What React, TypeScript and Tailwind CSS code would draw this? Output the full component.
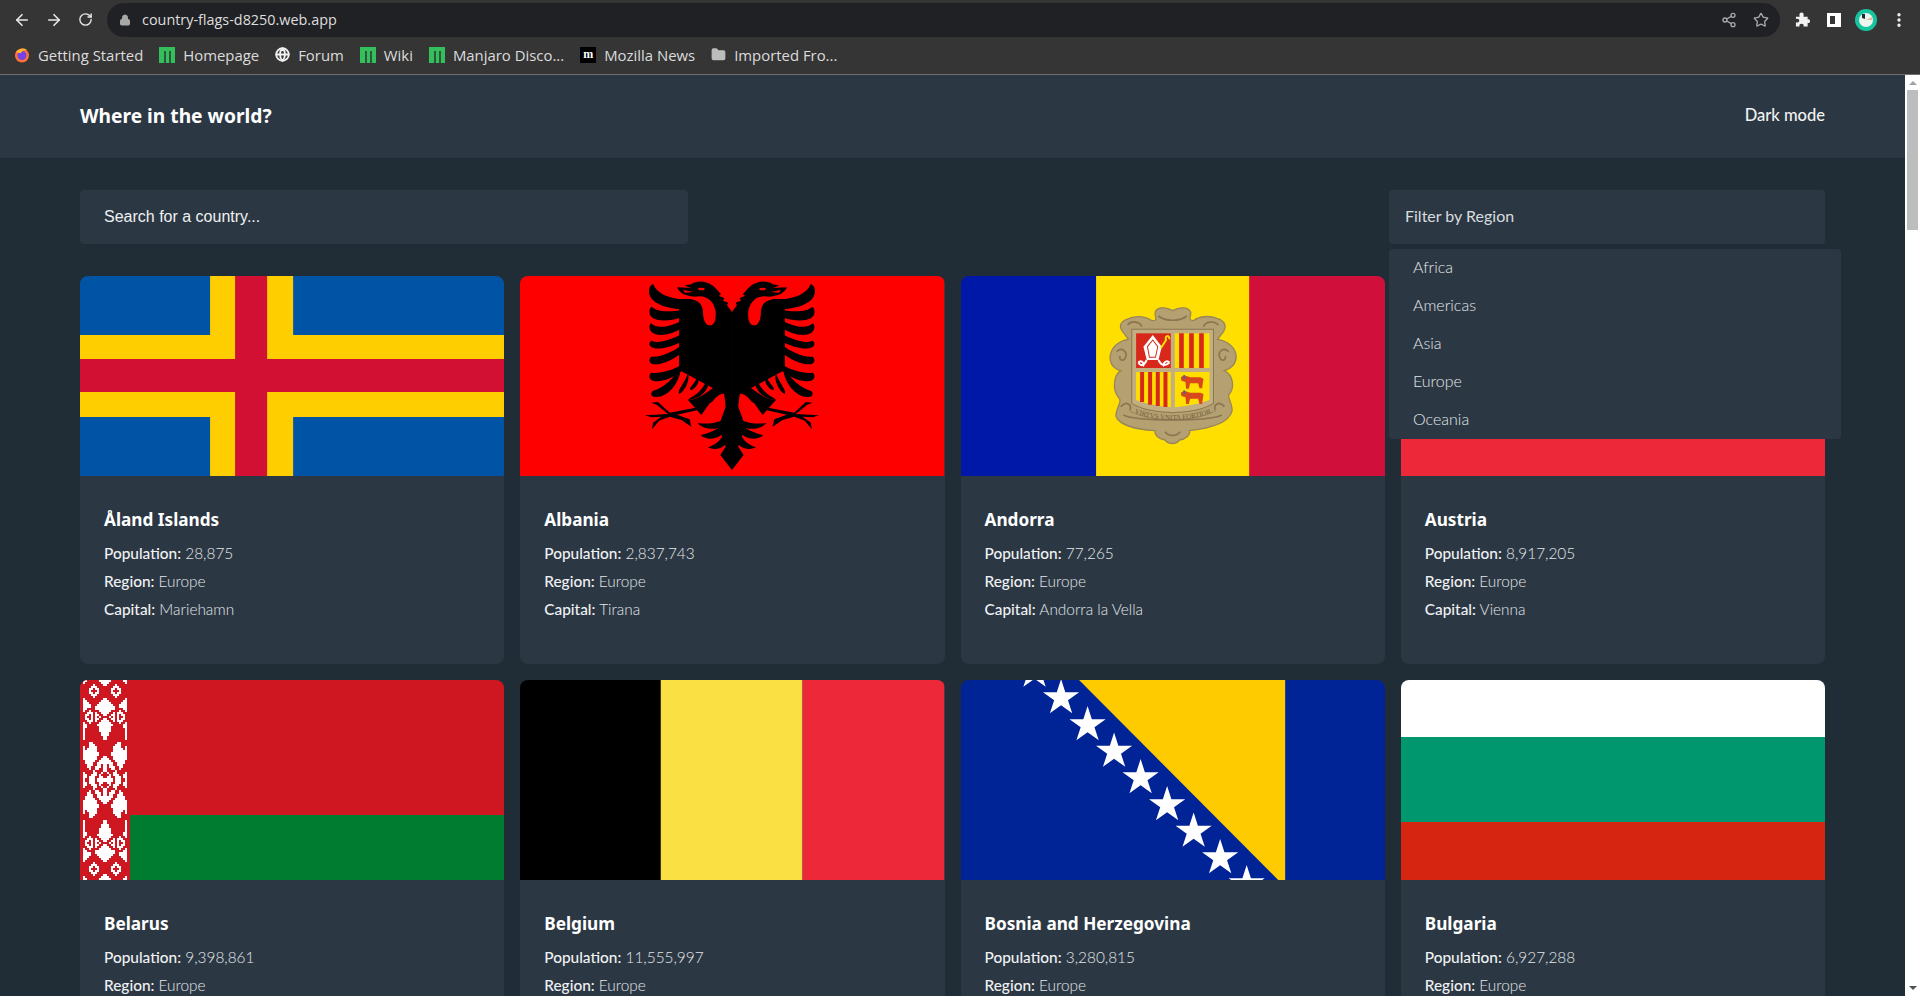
import React from "react";
import { ArrowLeft, ArrowRight, RotateCw, Lock, Share2, Star, EllipsisVertical, Globe, Folder } from "lucide-react";

const StarShape = ({ cx, cy, r = 19 }: { cx: number; cy: number; r?: number }) => {
  const pts: string[] = [];
  for (let i = 0; i < 10; i++) {
    const rad = i % 2 === 0 ? r : r * 0.382;
    const a = (-90 + i * 36) * (Math.PI / 180);
    pts.push(`${cx + rad * Math.cos(a)},${cy + rad * Math.sin(a)}`);
  }
  return <polygon points={pts.join(" ")} fill="#fff" />;
};

const FlagAland = () => (
  <svg viewBox="0 0 424 200" preserveAspectRatio="none" className="block w-full h-full">
    <rect width="424" height="200" fill="#0053a5" />
    <rect x="130" width="83" height="200" fill="#ffce00" />
    <rect y="59" width="424" height="82" fill="#ffce00" />
    <rect x="155" width="32" height="200" fill="#d21034" />
    <rect y="83" width="424" height="33" fill="#d21034" />
  </svg>
);

const EagleHalf = () => (
  <g>
    {/* wing feathers */}
    <path d="M100 42 C112 72 150 86 190 88 L190 118 C130 116 82 95 88 58 C89 50 94 44 100 42Z" />
    <path d="M96 110 C112 126 145 126 190 120 L190 140 C150 156 88 158 89 125 C89 116 92 112 96 110Z" />
    <path d="M94 160 C112 178 150 172 190 150 L190 172 C150 200 92 205 89 172 C89 166 91 162 94 160Z" />
    <path d="M95 212 C115 222 150 212 190 190 L190 212 C150 236 92 245 89 222 C89 217 92 214 95 212Z" />
    <path d="M95 260 C120 262 155 250 190 222 L190 245 C150 280 92 295 89 272 C89 266 91 262 95 260Z" />
    <path d="M94 308 C120 312 160 300 185 285 L190 300 C150 335 92 345 89 320 C89 314 91 310 94 308Z" />
    <path d="M100 362 C130 355 165 325 183 288 C185 330 150 380 110 381 C96 381 88 372 100 362Z" />
    {/* body and neck */}
    <path d="M178 88 L250 85 L337 125 L337 600 L302 555 L318 530 L300 480 L300 460 L318 410 L314 372 L262 345 L178 300Z" />
    {/* head */}
    <path d="M337 125 L322 106 L326 98 L310 92 L314 84 L298 78 L304 72 C290 58 284 45 262 38 C245 32 225 35 215 43 L195 46 C203 50 207 53 216 54 L172 52 C178 68 195 78 225 80 L290 110Z" />
    {/* claw feathers under the wing */}
    <path d="M205 310 C212 330 195 365 178 372 C172 360 192 345 205 310Z" />
    <path d="M232 315 C248 335 222 362 212 360 C205 350 232 340 232 315Z" />
    <path d="M264 322 C278 345 250 388 205 390 L210 385 C240 370 258 345 264 322Z" />
    <path d="M205 390 C245 390 275 350 300 345 L320 375 L270 400 L245 435 Z" />
    {/* talon */}
    <path d="M228 413 L150 428 L115 396 L95 398 L112 405 L145 432 L75 436 L95 442 L125 440 L100 458 L97 478 L118 452 L150 440 L185 450 L215 470 L210 448 L172 434 L235 420Z" />
    {/* tail feathers */}
    <path d="M233 458 C250 462 275 462 292 456 L305 452 L305 470 C290 480 250 480 233 458Z" />
    <path d="M243 495 C265 490 285 482 302 470 L310 490 C300 505 262 515 243 495Z" />
    <path d="M265 532 C285 525 300 515 310 495 L322 510 C322 530 290 545 265 532Z" />
    {/* red gaps */}
    <path d="M192 84 C220 88 248 90 250 125 C250 150 258 166 270 166 C284 166 290 150 288 125 C284 95 262 72 225 80 C210 82 200 82 192 84Z" fill="#ff0000" />
    <path d="M314 372 C298 365 275 395 250 435 C275 430 312 405 314 372Z" fill="#ff0000" />
    <ellipse cx="245" cy="57" rx="10" ry="4" fill="#ff0000" />
    <path d="M190 60 L222 66 L195 68Z" fill="#ff0000" />
  </g>
);

const FlagAlbania = () => (
  <svg viewBox="0 0 425 200" preserveAspectRatio="none" className="block w-full h-full">
    <rect width="425" height="200" fill="#ff0000" />
    <g transform="translate(100,-6) scale(0.33333)">
      <EagleHalf />
      <g transform="translate(674,0) scale(-1,1)">
        <EagleHalf />
      </g>
    </g>
  </svg>
);

const FlagAndorra = () => (
  <svg viewBox="0 0 424 200" preserveAspectRatio="none" className="block w-full h-full">
    <rect width="136" height="200" fill="#0018a8" />
    <rect x="135" width="154" height="200" fill="#fedf00" />
    <rect x="288" width="136" height="200" fill="#d0103a" />
    <g transform="translate(129,4) scale(0.33333)">
      {/* cartouche */}
      <path
        d="M248 92 C225 78 195 82 195 100 C195 115 205 122 185 122 C165 108 135 105 110 118 C90 125 85 140 100 158 L115 178 C85 182 60 205 60 235 C62 260 80 270 92 272 C72 285 65 325 85 352 C100 365 75 385 78 410 C88 432 130 448 195 452 C192 470 215 478 225 480 C235 494 258 494 268 480 C285 478 302 465 298 452 C360 445 415 430 425 395 C430 380 415 360 415 345 C435 325 430 285 402 272 C425 265 438 250 438 228 C435 200 410 182 382 178 L400 155 C412 135 400 120 380 115 C355 105 325 110 310 122 C292 122 302 110 302 98 C298 82 270 78 248 92Z"
        fill="#b5a071"
        stroke="#9a8658"
        strokeWidth="4"
      />
      <path d="M205 108 C225 125 270 125 290 108 M112 135 C125 120 150 125 155 140 M385 135 C370 120 345 125 340 140 M80 215 C95 200 115 215 105 235 C100 245 85 240 90 228 M415 215 C400 200 380 215 390 235 C395 245 410 240 405 228 M100 405 C140 425 355 425 395 405 M92 380 C110 360 125 375 120 390 M403 380 C385 360 370 375 375 390 M225 455 C235 470 260 470 270 455" fill="none" stroke="#8a7650" strokeWidth="5" />
      {/* shield */}
      <path d="M125 148 H370 V370 C330 395 280 395 248 398 C215 395 165 395 125 370Z" fill="#c2ae80" stroke="#8a7650" strokeWidth="3" />
      <rect x="138" y="160" width="104" height="104" fill="#d8281c" />
      <rect x="254" y="160" width="104" height="104" fill="#fedf00" />
      <path d="M267 160h14v104h-14zM297 160h14v104h-14zM327 160h14v104h-14z" fill="#d8281c" />
      <path d="M138 276 H242 V382 C205 378 170 372 138 360Z" fill="#fedf00" />
      <path d="M150 276h12v90h-12zM174 276h12v98h-12zM197 276h12v102h-12zM220 276h12v105h-12z" fill="#d8281c" />
      <path d="M254 276 H358 V360 C325 372 290 378 254 382Z" fill="#fedf00" />
      {/* mitre and crozier */}
      <path d="M188 165 L215 200 L205 240 H170 L160 200Z" fill="#fff" />
      <path d="M172 200 L188 180 L203 200 L196 232 H178Z" fill="none" stroke="#d8281c" strokeWidth="3" />
      <path d="M145 248 C155 235 165 255 158 258 M238 248 C228 235 215 255 222 258 M170 240 C160 260 150 258 145 248 M205 240 C215 260 228 258 238 248" fill="none" stroke="#fff" strokeWidth="6" />
      <path d="M212 205 L228 180 C222 168 238 162 238 178" fill="none" stroke="#fedf00" strokeWidth="6" />
      {/* cows */}
      <path d="M272 292 L282 286 L300 292 H330 L340 296 L336 325 H328 L324 310 H300 L296 326 H288 L286 306 L274 302Z" fill="#d8481c" />
      <path d="M272 338 L282 332 L300 338 H330 L340 342 L336 372 H328 L324 356 H300 L296 372 H288 L286 352 L274 348Z" fill="#d8481c" />
      <path d="M282 285 v12 M282 331 v12" stroke="#1f6fc0" strokeWidth="4" />
      <path d="M118 392 C180 428 310 428 378 392" fill="none" stroke="#8a7650" strokeWidth="2" id="motto-line" />
      <text fontFamily="'Liberation Serif', serif" fontSize="21" fill="#6f5d3a" textAnchor="middle">
        <textPath href="#motto-line" startOffset="50%">VIRTVS VNITA FORTIOR</textPath>
      </text>
    </g>
  </svg>
);

const FlagAustria = () => (
  <svg viewBox="0 0 424 200" preserveAspectRatio="none" className="block w-full h-full">
    <rect width="424" height="200" fill="#ed2939" />
    <rect y="67" width="424" height="67" fill="#fff" />
  </svg>
);

// one quarter of the hoist ornament, # is white, cells are 2px
const belarusRows = [
  ".##......###", ".#........##", "......#....#", ".....###....", "....##.##...",
  "....#...#...", "....##.##...", ".....###....", "......#.....", ".#.........#",
  ".##.......##", ".###.....###", ".####...####", ".####..#####", ".##....#####",
  ".#..#....###", "...###.#..##", "..##.#.##..#", "..#..#.#.#..", "..##.#.##..#",
  "...###.#..##", ".#..#....###", ".##.....####", ".##......###", ".#.......###",
  ".#.......###", ".#........##", ".#........##", ".#.........#", ".#.........#",
  "............", "....##......", "....###.....", ".#..####....", ".#.#####....",
  ".#######....", ".########...", ".########...", ".#######...#", ".#######..##",
  "..#####..###", "..####..####", "...###..##.#", "...##..###.#", "....#..##..#",
  "......#....#", ".#....##..#.", ".##..###.#..", ".##.###..##.", ".#..###.####",
];

const FlagBelarus = () => {
  const cells: React.ReactNode[] = [];
  belarusRows.forEach((row, r) => {
    row.split("").forEach((ch, c) => {
      if (ch !== "#") return;
      [
        [c, r],
        [23 - c, r],
        [c, 99 - r],
        [23 - c, 99 - r],
      ].forEach(([x, y]) => {
        cells.push(<rect key={`${x}-${y}`} x={1 + x * 2} y={y * 2} width="2" height="2" fill="#fff" />);
      });
    });
  });
  return (
    <svg viewBox="0 0 424 200" preserveAspectRatio="none" className="block w-full h-full">
      <rect width="424" height="135" fill="#ce1720" />
      <rect y="135" width="424" height="65" fill="#007c30" />
      <rect width="50" height="200" fill="#ce1720" />
      <g shapeRendering="crispEdges">{cells}</g>
    </svg>
  );
};

const FlagBelgium = () => (
  <svg viewBox="0 0 425 200" preserveAspectRatio="none" className="block w-full h-full">
    <rect width="142" height="200" fill="#000" />
    <rect x="141" width="142" height="200" fill="#fae042" />
    <rect x="283" width="142" height="200" fill="#ed2939" />
  </svg>
);

const FlagBosnia = () => (
  <svg viewBox="0 0 424 200" preserveAspectRatio="none" className="block w-full h-full">
    <rect width="424" height="200" fill="#002395" />
    <polygon points="118,0 324,0 324,200 317,200" fill="#fecb00" />
    {[-8.5, 18, 45, 71.5, 98, 125, 151.5, 178, 204].map((y, i) => (
      <StarShape key={y} cx={73.5 + i * 26.5} cy={y} />
    ))}
  </svg>
);

const FlagBulgaria = () => (
  <svg viewBox="0 0 424 200" preserveAspectRatio="none" className="block w-full h-full">
    <rect width="424" height="57" fill="#fff" />
    <rect y="57" width="424" height="85" fill="#00966e" />
    <rect y="142" width="424" height="58" fill="#d62612" />
  </svg>
);

const countries = [
  { name: "Åland Islands", population: "28,875", capital: "Mariehamn", flag: <FlagAland /> },
  { name: "Albania", population: "2,837,743", capital: "Tirana", flag: <FlagAlbania /> },
  { name: "Andorra", population: "77,265", capital: "Andorra la Vella", flag: <FlagAndorra /> },
  { name: "Austria", population: "8,917,205", capital: "Vienna", flag: <FlagAustria /> },
  { name: "Belarus", population: "9,398,861", capital: "Minsk", flag: <FlagBelarus /> },
  { name: "Belgium", population: "11,555,997", capital: "Brussels", flag: <FlagBelgium /> },
  { name: "Bosnia and Herzegovina", population: "3,280,815", capital: "Sarajevo", flag: <FlagBosnia /> },
  { name: "Bulgaria", population: "6,927,288", capital: "Sofia", flag: <FlagBulgaria /> },
];

const ManjaroIcon = () => (
  <svg viewBox="0 0 16 16" className="w-4 h-4 shrink-0">
    <rect width="16" height="16" fill="#35bf5c" />
    <rect x="5" y="4" width="2" height="12" fill="#2b2b2b" opacity="0.7" />
    <rect x="10" y="4" width="2" height="12" fill="#2b2b2b" opacity="0.7" />
  </svg>
);

const FirefoxIcon = () => (
  <svg viewBox="0 0 16 16" className="w-4 h-4 shrink-0">
    <circle cx="8" cy="8.5" r="7" fill="#ff7139" />
    <circle cx="8" cy="8.5" r="4.5" fill="#7542e5" />
    <path d="M2 5 C5 2 9 0 13 3 C9 3 8 4 7 6 C5 6 3 6 2 5Z" fill="#ffb52e" />
  </svg>
);

const Bookmark = ({ icon, label }: { icon: React.ReactNode; label: string }) => (
  <div className="flex items-center gap-2">
    {icon}
    <span className="text-[14.9px] text-[#dcdcdc]">{label}</span>
  </div>
);

const BrowserChrome = () => (
  <div className="h-[75px] bg-[#353535] border-b border-[#6f6f6f] font-['Open_Sans',sans-serif]">
    {/* toolbar */}
    <div className="h-[40px] flex items-center pl-[13px] pr-[10px] pb-px">
      <ArrowLeft size={18} color="#e8e8e8" strokeWidth={2.2} />
      <ArrowRight size={18} color="#e8e8e8" strokeWidth={2.2} className="ml-[14px]" />
      <RotateCw size={15} color="#e8e8e8" strokeWidth={2.2} className="ml-[15px]" />
      <div className="ml-[14px] w-[1673px] h-[34px] rounded-full bg-[#202124] flex items-center pl-[12px] pr-[11px]">
        <Lock size={12} color="#a8a8a8" fill="#a8a8a8" />
        <span className="ml-[11px] text-[14.4px] text-[#dedede]">country-flags-d8250.web.app</span>
        <Share2 size={16} color="#a8a8a8" className="ml-auto" />
        <Star size={16} color="#a8a8a8" strokeWidth={2} className="ml-[16px]" />
      </div>
      <svg viewBox="0 0 16 16" className="w-[15px] h-[15px] ml-[15px]" fill="#f2f2f2">
        <path d="M1 5 H5 C4 2 5.500 0.500 7 0.500 C8.500 0.500 10 2 9 5 H13.500 V8 C15.500 7 16 8.500 16 9.800 C16 11.200 15 12.500 13.500 11.500 V15.500 H9 C10 13.500 8.500 12.500 7 12.500 C5.500 12.500 4 13.500 5 15.500 H1 V11 C3 12 4.500 10.500 4.500 9 C4.500 7.500 3 6.500 1 7.500Z" />
      </svg>
      <div className="ml-[17px] w-[14px] h-[14px] bg-white flex justify-start">
        <div className="ml-[3px] mt-[3px] w-[5px] h-[8px] bg-[#353535]" />
      </div>
      <svg viewBox="0 0 22 22" className="w-[22px] h-[22px] ml-[14px]">
        <circle cx="11" cy="11" r="11" fill="#16c5a0" />
        <circle cx="11" cy="11" r="7" fill="#eef5ee" />
        <path d="M7 5 L10 5 L10 10 L7 9Z" fill="#1b2a38" />
        <path d="M11 11 L17 8 L17 11Z" fill="#e8b8a0" />
      </svg>
      <EllipsisVertical size={18} color="#f2f2f2" strokeWidth={2.5} className="ml-[13px]" />
    </div>
    {/* bookmarks bar */}
    <div className="h-[30px] flex items-center pl-[14px] gap-[16px]">
      <Bookmark icon={<FirefoxIcon />} label="Getting Started" />
      <Bookmark icon={<ManjaroIcon />} label="Homepage" />
      <Bookmark icon={<Globe size={15} color="#f2f2f2" strokeWidth={3} />} label="Forum" />
      <Bookmark icon={<ManjaroIcon />} label="Wiki" />
      <Bookmark icon={<ManjaroIcon />} label="Manjaro Disco..." />
      <Bookmark
        icon={
          <span className="w-[16px] h-[16px] bg-black text-white text-[12px] font-bold leading-[15px] text-center font-['Liberation_Serif',serif]">
            m
          </span>
        }
        label="Mozilla News"
      />
      <Bookmark icon={<Folder size={15} color="#bdbdbd" fill="#bdbdbd" />} label="Imported Fro..." />
    </div>
  </div>
);

const Card = ({ name, population, capital, flag }: (typeof countries)[number]) => (
  <div className="h-[388px] rounded-lg overflow-hidden bg-[#2b3844]">
    <div className="h-[200px]">{flag}</div>
    <div className="pt-[32px] px-6">
      <h2 className="font-['Noto_Sans',sans-serif] text-[17.2px] leading-[24px] font-bold text-white mb-[7px]">{name}</h2>
      <p className="text-[15.4px] leading-[28px] font-light text-[#e4e6e9]"><span className="font-medium text-[#f0f1f3]">Population:</span> {population}</p>
      <p className="text-[15.4px] leading-[28px] font-light text-[#e4e6e9]"><span className="font-medium text-[#f0f1f3]">Region:</span> Europe</p>
      <p className="text-[15.4px] leading-[28px] font-light text-[#e4e6e9]"><span className="font-medium text-[#f0f1f3]">Capital:</span> {capital}</p>
    </div>
  </div>
);

export default function App() {
  return (
    <div className="h-[996px] w-[1920px] overflow-hidden flex flex-col bg-[#202c36] font-['Lato',sans-serif]">
      <BrowserChrome />
      <div className="flex flex-1 min-h-0">
        <div className="flex-1 min-w-0">
          {/* Header */}
          <header className="h-[83px] bg-[#2b3844] px-20 flex items-center justify-between">
            <h1 className="font-['Noto_Sans',sans-serif] text-[19.2px] font-bold text-white">Where in the world?</h1>
            <span className="text-[16.500px] pb-[2px] font-medium text-[#f2f2f2]">Dark mode</span>
          </header>

          <main className="px-20 pt-8">
            {/* Search and filter */}
            <div className="flex justify-between">
              <div className="w-[608px] h-[54px] rounded bg-[#2b3844] flex items-center pl-6 font-['Liberation_Sans',sans-serif] text-[16px] text-[#f0f0f0]">
                Search for a country...
              </div>
              <div className="relative w-[436px] h-[54px] rounded bg-[#2b3844] flex items-center pl-[16px] pb-[2px] text-[16px] text-[#d8dcdf]">
                Filter by Region
                <ul className="absolute z-10 top-[59px] left-0 w-[452px] h-[190px] rounded bg-[#2b3844] pl-6 text-[16px] font-light text-[#e4e6e9]">
                  {["Africa", "Americas", "Asia", "Europe", "Oceania"].map((region) => (
                    <li key={region} className="h-[38px] pb-[2px] flex items-center">{region}</li>
                  ))}
                </ul>
              </div>
            </div>

            {/* Countries */}
            <div className="grid grid-cols-4 gap-x-4 gap-y-4 mt-[32px]">
              {countries.map((c) => (
                <Card key={c.name} {...c} />
              ))}
            </div>
          </main>
        </div>

        {/* Scrollbar */}
        <div className="w-[15px] shrink-0 bg-white flex flex-col items-center">
          <div className="mt-[6px] w-0 h-0 border-x-[4px] border-x-transparent border-b-[4px] border-b-[#a3a3a3]" />
          <div className="mt-[5px] w-[11px] h-[140px] bg-[#bdbdbd]" />
          <div className="mt-auto mb-[6px] w-0 h-0 border-x-[4px] border-x-transparent border-t-[4px] border-t-[#505050]" />
        </div>
      </div>
    </div>
  );
}
